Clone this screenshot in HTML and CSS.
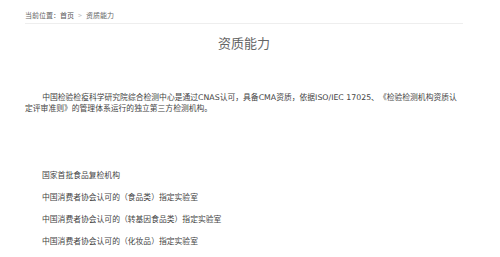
FILE: index.html
```html
<!DOCTYPE html>
<html lang="zh-CN">
<head>
    <meta charset="UTF-8">
    <title>资质能力</title>
    <link rel="stylesheet" href="styles.css">
</head>
<body>
    <div class="page">
        <div class="crumb">
            当前位置：<a href="#">首页</a><span class="sep">&gt;</span><span>资质能力</span>
        </div>
        <h1 class="title">资质能力</h1>
        <div class="content">
            <p class="intro">中国检验检疫科学研究院综合检测中心是通过CNAS认可，具备CMA资质，依据ISO/IEC 17025、《检验检测机构资质认定评审准则》的管理体系运行的独立第三方检测机构。</p>
            <ul class="quals">
                <li>国家首批食品复检机构</li>
                <li>中国消费者协会认可的（食品类）指定实验室</li>
                <li>中国消费者协会认可的（转基因食品类）指定实验室</li>
                <li>中国消费者协会认可的（化妆品）指定实验室</li>
            </ul>
        </div>
    </div>
</body>
</html>
```

FILE: styles.css
```css
body {
    margin: 0;
    padding: 0;
    background-color: #fff;
    font-family: "Noto Sans CJK SC", "Noto Sans", sans-serif;
    color: #444;
    text-spacing-trim: space-all;
}

.page {
    width: 438px;
    margin-left: 25px;
}

.crumb {
    font-size: 7px;
    line-height: 10px;
    padding: 10px 0 3px;
    color: #666;
    border-bottom: 1px solid #eee;
}
.crumb a {
    color: #555;
    text-decoration: none;
}
.crumb .sep {
    color: #bbb;
    margin: 0 4px;
}

.title {
    margin: 9px 0 0;
    font-size: 13px;
    line-height: 20px;
    font-weight: normal;
    color: #666;
    text-align: center;
}

.content {
    font-family: "DejaVu Sans", "Noto Sans CJK SC", sans-serif;
    font-size: 7.8px;
    line-height: 11px;
}
.intro {
    margin: 39px 0 0;
    text-indent: 2.2em;
}
.quals {
    list-style: none;
    margin: 0;
    padding: 0 0 0 17px;
}
.quals li {
    margin-top: 11px;
}
.quals li:first-child {
    margin-top: 56px;
}
```
